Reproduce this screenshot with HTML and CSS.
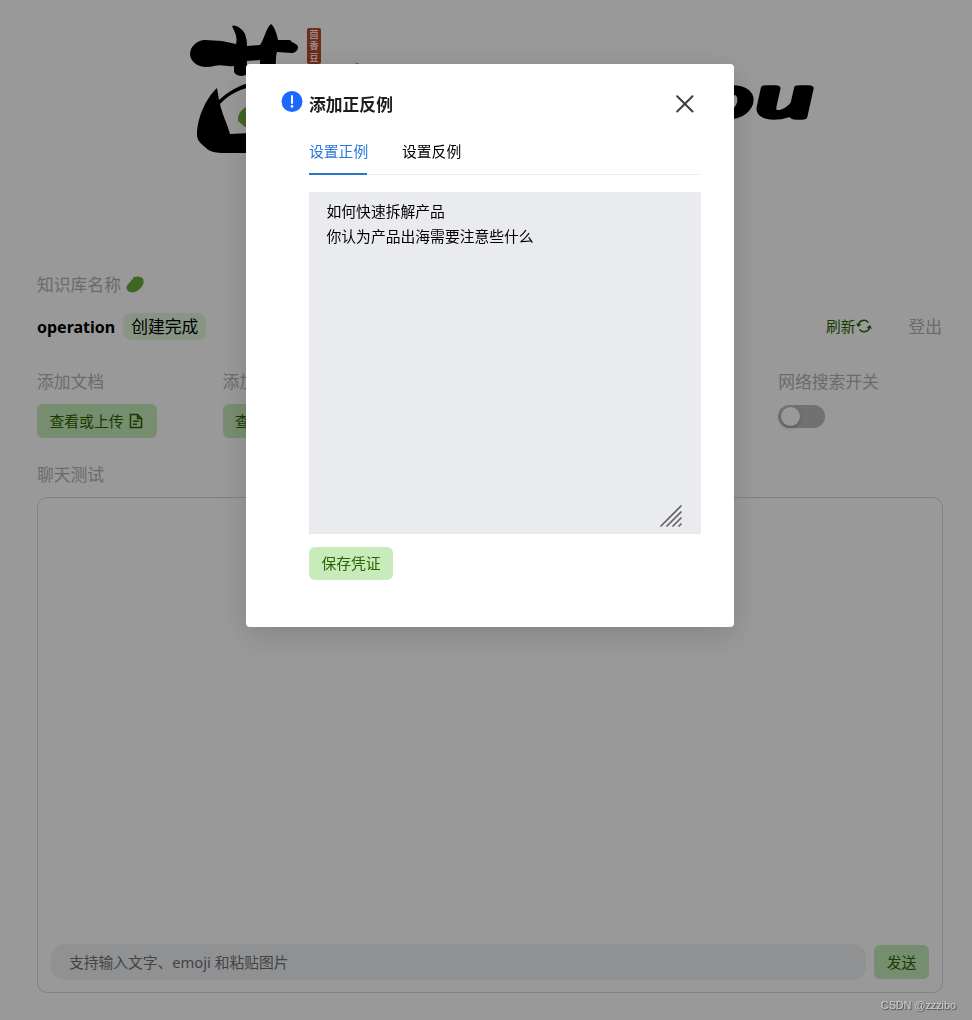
FILE: index.html
```html
<!DOCTYPE html>
<html lang="zh-CN">
<head>
<meta charset="utf-8">
<title>茴香豆</title>
<link rel="stylesheet" href="styles.css">
</head>
<body>
<div class="page">
  <header class="brand">
    <svg class="brand-logo" viewBox="0 0 640 140" width="640" height="140">
      <path d="M10 34C10 27 17 20 25 20L42 21L56 24C58 16 54 11 52 6C55 4 62 8 65 14Q67 19 67 26L80 25C84 20 86 8 91 4C94 6 97 14 98 20L110 20C112 23 118 24 118 27C118 31 114 33 112 33L97 32C95 38 97 45 94 53H80V40L67 41C66 47 70 50 67 54C62 58 54 55 54 51L54 46C47 47 42 44 34 46C20 50 10 42 10 34Z"/>
      <path d="M37 68C26 78 17 98 17 115C17 120 21 124 25 127C31 134 41 133 52 133H90V112L50 114C47 103 42 94 40 84C50 73 62 69 74 66V62C60 64 48 72 39 80Z"/>
      <path class="brand-bean" d="M76 84C65 85 57 92 58 101L65 107H84Z"/>
      <ellipse cx="177" cy="46" rx="3" ry="2.500"/>
      <rect class="brand-seal" x="127" y="8" width="14" height="36" rx="2"/>
      <text class="brand-seal-text" x="134" y="17.500">茴</text>
      <text class="brand-seal-text" x="134" y="29.200">香</text>
      <text class="brand-seal-text" x="134" y="41">豆</text>
      <text class="brand-word" x="528" y="97" textLength="45" lengthAdjust="spacingAndGlyphs">o</text>
      <text class="brand-word" x="577" y="97" textLength="56" lengthAdjust="spacingAndGlyphs">u</text>
    </svg>
  </header>

  <main>
    <div class="label name-label">知识库名称
      <svg width="18" height="18" viewBox="0 0 18 18"><path fill="#6cab3d" d="M5 3L6.500 4.500L7 1.500C11 -.5 17 .5 17.500 4C18.500 9 14 14 9 16C4 17.500 .5 15 .5 11.500C1 8 4 7 5 5Z"/></svg>
    </div>
    <div class="name-row">
      <strong>operation</strong><span class="badge">创建完成</span>
      <a class="refresh">刷新<svg width="16" height="16" viewBox="0 0 16 16" fill="none" stroke="currentColor" stroke-width="1.500"><path d="M2.500 7.500A5.500 5.500 0 0 1 12.500 4.600M13.500 8.500A5.500 5.500 0 0 1 3.500 11.400"/><path fill="currentColor" stroke="none" d="M0 5.500L5.500 6.300L2 9ZM10.500 9.700L14 7L16 10.700Z"/></svg></a>
      <a class="logout">登出</a>
    </div>
    <div class="features">
      <div><div class="label">添加文档</div>
        <button class="btn upload">查看或上传<svg width="14" height="16" viewBox="0 0 14 16" fill="none" stroke="currentColor" stroke-width="1.500"><path d="M1.500 1.500H8.500L12.500 5.500V14.500H1.500ZM8.500 1.500V5.500H12.500M4 8.200H10M4 11.200H8"/></svg></button></div>
      <div><div class="label">添加正反例</div>
        <button class="btn upload">查看或编辑<svg width="14" height="16" viewBox="0 0 14 16" fill="none" stroke="currentColor" stroke-width="1.500"><path d="M1.500 14.500H12.500M2 11.500V8.500L9 1.500L12 4.500L5 11.500Z"/></svg></button></div>
      <div></div>
      <div></div>
      <div><div class="label">网络搜索开关</div><div class="toggle"><span></span></div></div>
    </div>
    <div class="label">聊天测试</div>
    <section class="chat">
      <div class="chat-input">支持输入文字、emoji 和粘贴图片</div>
      <button class="btn send">发送</button>
    </section>
  </main>
</div>

<div class="overlay">
  <section class="modal">
    <div class="modal-head">
      <svg class="info" width="22" height="22" viewBox="0 0 22 22"><circle cx="11" cy="10.500" r="10.500" fill="#1c69ff"/><path d="M11 5V12" stroke="#fff" stroke-width="2" stroke-linecap="round"/><circle cx="11" cy="15.400" r="1.300" fill="#fff"/></svg>
      <h2>添加正反例</h2>
      <svg class="close" width="18" height="18" viewBox="0 0 18 18"><path d="M1.200 1.200L16.500 16.500M16.500 1.200L1.200 16.500" stroke="#3d3d42" stroke-width="2" stroke-linecap="round"/></svg>
    </div>
    <div class="modal-body">
      <nav class="tabs"><a class="tab active">设置正例</a><a class="tab">设置反例</a></nav>
      <div class="editor">
        <div>如何快速拆解产品</div>
        <div>你认为产品出海需要注意些什么</div>
        <svg class="grip" width="24" height="24" viewBox="0 0 24 24"><path d="M2 22L22 2M8 22L22 8M14 22L22 14M20 22L22 20" stroke="#616166" stroke-width="1.700" stroke-linecap="round"/></svg>
      </div>
      <button class="btn save">保存凭证</button>
    </div>
  </section>
</div>
<div class="watermark">CSDN @zzzibo</div>
</body>
</html>
```
FILE: styles.css
```css
* { box-sizing: border-box; }
body {
  margin: 0;
  height: 1020px;
  overflow: hidden;
  background: #fff;
  color: #000;
  font: 16.8px/24px "Noto Sans", "Noto Sans CJK SC", sans-serif;
}
.page { padding: 20px 29px 0 37px; }
.brand { height: 253px; padding-left: 143px; }
.brand-logo { display: block; }
.brand-bean { fill: #6cab3d; }
.brand-seal { fill: #b5482d; }
.brand-seal-text { font: bold 9px "Liberation Sans", "Noto Sans CJK SC", sans-serif; fill: #ffe9df; text-anchor: middle; }
.brand-word {
  font: italic 400 56px Lato, sans-serif;
  stroke: #000;
  stroke-width: 5.5px;
  stroke-linejoin: round;
}
.label { color: #b2b2b2; line-height: 24px; }
.name-label { display: flex; align-items: center; gap: 5px; }
.name-row { display: flex; align-items: center; height: 27px; margin-top: 16px; }
.name-row strong { font-size: 16px; }
.badge {
  margin-left: 8px;
  padding: 0 8px;
  height: 27px;
  line-height: 27px;
  border-radius: 8px;
  background: #e3f9dd;
}
.refresh {
  display: flex;
  align-items: center;
  gap: 1px;
  margin: 0 1px 1px auto;
  color: #286500;
  font-size: 14.7px;
}
.logout { margin-left: 35px; padding-right: 1px; color: #b2b2b2; }
.features {
  display: grid;
  grid-template-columns: 185.6px repeat(4, 185.2px);
  height: 93px;
  margin-top: 30px;
}
.btn {
  display: flex;
  align-items: center;
  justify-content: center;
  border: 0;
  padding: 0;
  border-radius: 6px;
  background: #c7ebbb;
  color: #286500;
  font: 14.8px/20px "Noto Sans", "Noto Sans CJK SC", sans-serif;
}
.upload { width: 120px; height: 34px; margin-top: 10px; padding-right: 2px; gap: 5px; }
.toggle {
  width: 47px;
  height: 23px;
  margin-top: 11px;
  padding: 2px 3px;
  border-radius: 12px;
  background: #bdbdbd;
}
.toggle span {
  display: block;
  width: 19px;
  height: 19px;
  border-radius: 50%;
  background: #fff;
  box-shadow: 0 2px 4px rgba(0, 0, 0, .2);
}
.chat {
  display: flex;
  align-items: flex-end;
  gap: 8px;
  height: 496px;
  margin-top: 10px;
  padding: 0 13px 12px;
  border: 1px solid #d9d9d9;
  border-radius: 10px;
}
.chat-input {
  flex: 1;
  height: 36px;
  padding: 0 18px;
  border-radius: 14px;
  background: #f0f2f5;
  color: #707070;
  font-size: 14.75px;
  line-height: 36px;
}
.send { width: 55px; height: 34px; margin-bottom: 1px; }
.overlay {
  position: fixed;
  inset: 0;
  padding: 64px 238px 0 246px;
  background: rgba(0, 0, 0, .4);
}
.modal {
  height: 563px;
  padding: 27px 33px 0 35px;
  border-radius: 4px;
  background: #fff;
  box-shadow: 0 8px 32px rgba(0, 0, 0, .15);
}
.modal-head { display: flex; align-items: flex-start; height: 38px; }
.modal-head h2 {
  margin: 2px 0 0 6px;
  color: #1d1d20;
  font-size: 16.8px;
  font-weight: 700;
  line-height: 24px;
}
.close { margin: 4px 7px 0 auto; }
.modal-body { padding-left: 28px; }
.tabs {
  display: flex;
  gap: 35px;
  height: 46px;
  border-bottom: 1px solid #eee;
  font-size: 14.8px;
}
.tab { height: 46px; padding-top: 10px; line-height: 24px; }
.tab.active { width: 58px; border-bottom: 2px solid #2878c8; color: #2878dc; white-space: nowrap; }
.editor {
  position: relative;
  height: 342px;
  margin-top: 17px;
  padding: 7px 17.5px;
  background: #eaebef;
  font-size: 14.8px;
  line-height: 25px;
}
.grip { position: absolute; right: 18.5px; bottom: 6.5px; }
.save { width: 84px; height: 33px; margin-top: 13px; padding-bottom: 2px; }
.watermark {
  position: fixed;
  right: 16px;
  bottom: 7px;
  color: #d0d0d0;
  font: 10.8px/16px "Liberation Sans", sans-serif;
  text-shadow: 1px 1px 1px #444;
}
```
